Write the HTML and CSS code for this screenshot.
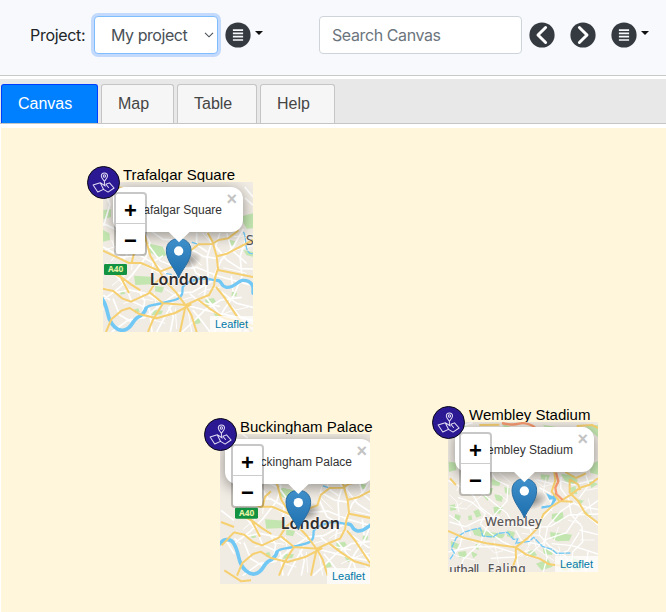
FILE: index.html
```html
<!DOCTYPE html>
<html lang="en">
<head>
<meta charset="utf-8">
<title>My project</title>
<link rel="stylesheet" href="styles.css">
</head>
<body>
<svg class="defs" width="0" height="0" aria-hidden="true">
  <defs>
    <linearGradient id="pin-fill" x1="0" y1="0" x2="0" y2="1"><stop offset="0" stop-color="#3f8fca"/><stop offset="1" stop-color="#1d6fae"/></linearGradient>
    <radialGradient id="pin-shade"><stop offset="0" stop-color="#000" stop-opacity=".42"/><stop offset="1" stop-color="#000" stop-opacity="0"/></radialGradient>
    <g id="pin">
      <ellipse cx="40" cy="-42" rx="46" ry="27" transform="rotate(-18)" fill="url(#pin-shade)"/>
      <path d="M0 0C-8-24-37-50-37-82C-37-105-21-118 0-118S37-105 37-82C37-50 8-24 0 0Z" fill="url(#pin-fill)" stroke="#2b6da1" stroke-width="3"/>
      <circle cy="-81" r="14" fill="#fff"/>
    </g>
    <symbol id="map-badge" viewBox="0 0 34 34">
      <g fill="none" stroke="#e4e0f5" stroke-width="1.1" stroke-linejoin="round" stroke-linecap="round">
        <path d="M13.4 17.2L5.6 19.8L10.7 27.5L17 24.5L22 27.5L28.6 23L23.6 17.4L19.6 18.9M13.4 17.2L19 20.8M13.4 17.2L17 24.5M19.6 18.9L22.5 22.5"/>
        <path d="M18 19.7V15.5M18 15.5C16 13.3 14.6 12 14.6 9.9A3.4 3.4 0 0 1 21.4 9.9C21.4 12 20 13.3 18 15.5Z"/>
        <circle cx="18" cy="9.9" r="1.3"/>
      </g>
    </symbol>
    <symbol id="menu" viewBox="0 0 26 26"><circle cx="13" cy="13" r="12.6" fill="#343a40"/><path d="M7.9 8.1H18.1M7.9 11.4H18.1M7.9 14.7H18.1M7.9 18H18.1" stroke="#f8f9fc" stroke-width="1.7"/></symbol>
    <g id="london">
      <path fill="#f0ebe3" d="M20 60H530V550H20Z"/>
      <g fill="#c3e6b0">
        <path d="M204 250L248 260L259 284L245 294L208 277ZM162 347L222 351L218 373L166 375ZM226 377L252 382L246 398L225 394ZM480 170L519 160V205L500 206ZM376 418L401 414L408 425L377 441ZM222 450L249 452L244 463L215 466ZM69 210L88 220L90 240L69 245ZM449 240L466 243L460 257L446 252ZM490 270L519 276V290L500 286ZM340 480L358 474L362 489L346 493ZM70 150L93 148V171L70 178ZM164 448L175 445L179 456L165 460ZM456 395L471 398L469 409L454 407ZM400 459L423 466L411 476ZM120 392L130 390L136 401L122 404Z"/>
      </g>
      <g fill="none" stroke="#fff" stroke-width="5">
        <path d="M69 190L136 222L204 253L240 302L298 326L350 322L414 348L519 377M69 260L124 292L178 285L230 315L280 357M81 310L111 350L145 389L201 401L250 430L320 436L410 459L519 480M95 516L145 480L193 473L243 433L290 400L338 396L400 361M190 208L210 248L198 291L155 346L118 383L69 420M118 190L145 247L173 285M204 207L249 238L300 241M230 516L255 469L279 427M271 516L280 470L266 440M306 516L345 480L375 450L422 420L485 412M380 218L394 250L381 292L384 345L373 406L425 471L442 516M420 218L407 258L440 300L480 326L519 327M440 220L455 270L500 310M490 207L460 260L424 300L401 350M500 230L480 290L486 350L460 409L430 452L404 516M328 265L370 289L414 296M325 290L348 339L374 355M329 401L360 427L420 439M99 416L119 465L155 486M131 361L154 423L208 448L216 516M74 385L111 397L145 390M176 390L194 423L186 474M350 218L350 254L382 276M338 450L368 486L390 516M424 396L470 430L519 442M454 439L480 470L519 483M454 347L459 395M250 287L220 304L215 347M150 270L130 300M70 405L90 420M30 320L69 350M45 410L70 450M69 90L90 132L71 198M80 79L110 103M494 81L519 110M495 114L519 135"/>
        <path stroke-width="3" d="M95 240L111 280L93 304M160 260L155 330M191 315L240 340M223 400L230 445M253 385L306 420L340 410M286 445L290 507M324 449L335 516M354 405L376 390L422 381M430 323L500 340M430 280L519 257M460 230L519 225M390 480L450 454L505 441M460 486L500 510M130 430L180 416L220 422M96 377L140 341M74 270L108 259M332 250L325 278L365 317M350 371L379 376M210 477L256 490M368 219L417 277"/>
      </g>
      <g fill="none" stroke="#72c8f4" stroke-linecap="round" stroke-linejoin="round">
        <path stroke-width="11" d="M28 420C38 403 62 404 69 421C81 440 81 458 88 477C96 496 112 513 130 511C158 506 155 482 172 473C186 467 194 459 198 445"/>
        <path stroke-width="7" d="M198 445C205 432 228 437 250 428C285 420 304 418 307 398L308 382C317 365 332 366 348 358C378 350 391 361 411 361"/>
        <path stroke-width="10" d="M411 361C429 361 419 379 440 382C463 383 470 366 486 361C503 360 515 366 519 382V400"/>
        <path stroke-width="4" d="M260 341L278 344M491 217C502 239 491 266 510 280L519 281M337 247L358 254" stroke-dasharray="14 6"/>
      </g>
      <g fill="none" stroke="#f6d070" stroke-width="6" stroke-linejoin="round">
        <path d="M190 214L201 251L211 288L240 336L260 367L288 397L317 436L334 465L350 516M69 272L107 290L147 309L183 309L241 334L284 318L319 305L329 274L356 253L396 252L416 240L445 235L476 211M383 219L397 244L410 289L414 326L406 350L402 377L387 405L354 418L318 435L249 430L208 396M414 330L519 351M410 289L441 281L519 240M300 516L317 436M204 516L219 479L249 430M69 386L100 393L126 415L153 425L205 401L224 371L249 349M119 345L147 399M78 516L94 478L126 451L149 444L180 463L230 475L285 459L334 433M351 417L391 447L430 473L519 498M408 381L431 409L475 475L516 516M79 330L123 351L154 374L181 391M69 88L93 81L130 84M155 309L162 279L180 263M32 425L69 386M30 355L69 370M40 500L91 533L120 530"/>
      </g>
      <text x="298" y="376" class="city" textLength="178">London</text>
      <rect x="72" y="312" width="69" height="33" rx="4" fill="#139342"/>
      <text x="107" y="337" class="road">A40</text>
      <text x="497" y="256" class="suburb">S</text>
      <text x="484" y="528" class="faint">Gr</text>
    </g>
  </defs>
</svg>

<header class="toolbar">
  <label class="project">Project:</label>
  <div class="select"><span>My project</span><svg width="10" height="6" viewBox="0 0 10 6"><path d="M1 .8L5 4.8L9 .8" fill="none" stroke="#495057" stroke-width="1.1"/></svg></div>
  <svg class="icon first-menu"><use href="#menu"/></svg><i class="caret"></i>
  <div class="search">Search Canvas</div>
  <svg class="icon prev" viewBox="0 0 26 26"><circle cx="13" cy="13" r="12.6" fill="#343a40"/><path d="M16.6 5.5L9 13L16.6 20.5" fill="none" stroke="#fff" stroke-width="3" stroke-linecap="round" stroke-linejoin="round"/></svg>
  <svg class="icon next" viewBox="0 0 26 26"><circle cx="13" cy="13" r="12.6" fill="#343a40"/><path d="M9.4 5.5L17 13L9.4 20.5" fill="none" stroke="#fff" stroke-width="3" stroke-linecap="round" stroke-linejoin="round"/></svg>
  <svg class="icon last-menu"><use href="#menu"/></svg><i class="caret"></i>
</header>

<nav class="tabs">
  <a class="tab active">Canvas</a><a class="tab map-tab">Map</a><a class="tab table-tab">Table</a><a class="tab help-tab">Help</a>
</nav>

<main class="canvas">
  <section class="node trafalgar">
    <h2>Trafalgar Square</h2>
    <div class="map">
      <svg class="tiles" viewBox="69 66 450 450"><use href="#london"/></svg>
      <div class="popup"><span>Trafalgar Square</span><b>×</b></div>
      <svg class="tiles" viewBox="69 66 450 450"><use href="#pin" x="296" y="354"/><path d="M264 214H331L297 247Z" fill="#fff"/></svg>
      <div class="zoom"><span>+</span><span>−</span></div>
      <div class="credit">Leaflet</div>
    </div>
    <svg class="badge"><use href="#map-badge"/></svg>
  </section>

  <section class="node buckingham">
    <h2>Buckingham Palace</h2>
    <div class="map">
      <svg class="tiles" viewBox="66 72 450 450"><use href="#london" x="39" y="-19"/></svg>
      <div class="popup"><span>Buckingham Palace</span><b>×</b></div>
      <svg class="tiles" viewBox="66 72 450 450"><use href="#pin" x="301" y="359"/><path d="M268 219H335L301 252Z" fill="#fff"/></svg>
      <div class="zoom"><span>+</span><span>−</span></div>
      <div class="credit">Leaflet</div>
    </div>
    <svg class="badge"><use href="#map-badge"/></svg>
  </section>

  <section class="node wembley">
    <h2>Wembley Stadium</h2>
    <div class="map">
      <svg class="tiles" viewBox="66 66 450 450">
        <path fill="#f0ebe3" d="M66 66H516V516H66Z"/>
        <path fill="#c3e6b0" d="M178 266L202 264L195 281L176 280ZM197 237L225 243L220 258L198 256ZM235 261L251 265L250 285L237 278ZM205 283L232 288L227 306L210 301ZM202 321L231 319L222 341L205 340ZM170 285L190 292L184 303ZM142 334L158 328L166 347L151 353ZM126 349L136 345L139 359L128 361ZM378 342L411 337L413 359L390 367L377 356ZM469 330L498 346L484 352ZM372 396L438 404L430 422L393 424L374 411ZM405 222L444 226L456 244L434 255L418 245ZM430 265L448 258L454 282L435 283ZM490 195L516 183V224L493 218ZM454 298L474 302L461 315ZM139 390L161 383L178 395L165 410L145 405ZM168 392L237 403L230 415L170 410ZM244 391L267 397L262 415L243 409ZM74 423L99 432L93 448L75 440ZM96 456L119 453L123 469L101 475ZM134 453L155 463L142 475ZM150 431L161 432L157 450L148 445ZM350 445L383 452L378 465L354 463ZM435 470L472 487L462 511L435 508ZM330 491L365 477L380 500L347 511ZM71 316L86 313L91 330L73 332ZM88 342L105 347L98 366L84 360ZM228 71L252 79L242 98ZM80 75L120 78L110 91ZM350 74L391 81L370 93ZM476 77L516 75V112ZM68 185L91 188V210L69 216ZM305 456L322 449L333 466L316 470ZM405 494L422 489L427 510L409 512ZM344 223L372 226L365 242L345 236ZM486 239L516 252L496 264Z"/>
        <g fill="none" stroke="#fff" stroke-width="4">
          <path d="M67 242L100 258L142 286L163 322L202 351L238 366L303 384L374 379L430 345L516 342M96 292L137 306L178 341L163 371L192 398L228 424L267 443L279 510M129 216L158 271L205 310L243 340L260 371M196 218L210 240L246 257L243 303L207 343L180 388L162 430L112 478L98 516M71 366L119 380L160 360L221 351M67 456L137 441L206 440L270 460M340 263L372 280L378 324L345 361L340 405L370 438L418 468L442 516M331 239L373 250L410 244L443 255L502 240M405 231L404 265L428 298L436 345L468 380L470 426L440 456L436 499M516 302L458 343L421 398L363 417L302 471M352 516L363 473L354 435L365 380L404 334L440 310L490 324L516 328M377 431L438 437L516 462M269 391L286 421L347 436L392 464L425 453L460 397M69 345L100 366L112 392L102 438L72 479M67 90L140 68M195 475L266 471L310 450M478 221L489 255L459 295M480 345L516 375M460 390L516 404M486 455L479 516M305 370L316 395L307 435"/>
          <path stroke-width="2.5" d="M70 284L92 304L99 337M110 239L92 273M110 306L87 324M171 255L168 286L124 323M220 219L254 248M222 283L244 303M129 379L133 408M170 425L206 459L231 452M287 400L340 407M321 408L332 447L384 482M315 430L285 470M398 380L384 422M398 437L412 501M426 360L465 371M487 295L496 340M442 306L477 334M463 420L506 420M352 314L380 334M325 239L350 260L388 251M204 423L218 490M74 415L131 420L167 438M89 467L146 480M361 230L352 276L383 322M71 320L124 327M481 271L516 264"/>
        </g>
        <path fill="none" stroke="#72c8f4" stroke-width="4" stroke-dasharray="18 3" d="M72 478L85 459L76 445L91 413L116 396L142 388L163 384L170 408L201 411L216 400L245 397L262 418L275 417L270 430L310 424L323 412L349 439L378 448L391 460L433 459"/>
        <path fill="#6fc5f2" d="M390 275L380 289L360 279L370 299L381 298L374 315L347 319L346 326L376 321L391 300Z"/>
        <g fill="none" stroke="#f6d070" stroke-width="6" stroke-linejoin="round"><path d="M66 393L118 415L181 430L269 442L301 464L341 476L369 493L405 497L423 510M269 442L270 474L260 502L262 516M269 442L304 415L334 385L352 343L378 319L431 286L463 263L489 255L516 235M385 215L388 242L377 275L400 303L440 305M431 238L431 278L456 303L478 340L516 369M431 238L456 253L463 270M418 216L450 234L480 220M72 235L90 255M160 75L220 74M452 78L498 75L516 84"/></g>
        <path d="M228 69Q258 77 279 71T327 82M390 218L397 244L388 263L391 282L410 300" fill="none" stroke="#f79a70" stroke-width="7"/>
        <text x="262" y="378" class="wembley-label" textLength="170">Wembley</text>
        <text x="115" y="521" class="cut-label" textLength="90">uthall</text>
        <text x="242" y="518" class="cut-label" textLength="114">Ealing</text>
      </svg>
      <div class="popup"><span>Wembley Stadium</span><b>×</b></div>
      <svg class="tiles" viewBox="66 66 450 450"><use href="#pin" x="295" y="354"/><path d="M262 214H329L295 247Z" fill="#fff"/></svg>
      <div class="zoom"><span>+</span><span>−</span></div>
      <div class="credit">Leaflet</div>
    </div>
    <svg class="badge"><use href="#map-badge"/></svg>
  </section>
</main>
</body>
</html>
```
FILE: styles.css
```css
* { box-sizing: border-box; }
body { margin: 0; width: 666px; height: 612px; overflow: hidden; background: #fff; font-family: "Liberation Sans", Arial, sans-serif; }
.defs { position: absolute; }
.toolbar { display: flex; align-items: center; height: 76px; padding: 0 0 6px 30px; background: #f8f9fc; border-bottom: 1px solid #c9c9c9; font: 16px Inter, sans-serif; letter-spacing: -.3px; color: #212529; }
.project { width: 64px; flex: none; }
.select { display: flex; align-items: center; justify-content: space-between; flex: none; width: 124px; height: 38px; padding: 0 3px 0 16px; background: #fff; border: 1px solid #80bdff; border-radius: 4px; box-shadow: 0 0 0 3px #c3dafd; color: #495057; letter-spacing: -.45px; }
.icon { width: 26px; height: 26px; flex: none; }
.first-menu { margin-left: 7px; }
.caret { flex: none; margin: -4px 0 0 4px; border: 4.5px solid transparent; border-top-color: #111; border-bottom: 0; }
.search { flex: none; width: 203px; height: 38px; margin-left: 56px; padding: 0 12px; line-height: 36px; border: 1px solid #ced4da; border-radius: 4px; background: #fff; color: #6c757d; letter-spacing: -.4px; }
.prev { margin-left: 7px; }
.next, .last-menu { margin-left: 15px; }
.tabs { display: flex; align-items: flex-end; height: 45px; margin-top: 3px; padding-left: 1px; background: #e8e8e8; border-bottom: 1px solid #c5c5c5; }
.tab { height: 39px; padding-left: 16px; border: 1px solid #c5c5c5; border-bottom: 0; border-radius: 3px 3px 0 0; background: #f6f6f6; color: #454545; font-size: 16px; line-height: 38px; }
.active { width: 97px; background: #007fff; border-color: #003eff; color: #fff; }
.map-tab { width: 73px; margin-left: 3px; }
.table-tab { width: 80px; margin-left: 3px; }
.help-tab { width: 75px; margin-left: 3px; }
.canvas { position: relative; height: 484px; margin: 4px 0 0 1px; background: #fff6dc; }
.node { position: absolute; width: 150px; height: 150px; }
.trafalgar { left: 102px; top: 54px; }
.buckingham { left: 219px; top: 306px; }
.wembley { left: 447px; top: 294px; }
.node h2 { position: absolute; left: 20px; top: -17px; margin: 0; font-size: 15px; line-height: 19px; font-weight: 400; white-space: nowrap; color: #000; }
.wembley h2 { left: 21px; }
.map { position: relative; width: 150px; height: 150px; overflow: hidden; }
.tiles { position: absolute; inset: 0; width: 150px; height: 150px; }
.badge { position: absolute; left: -16.5px; top: -16.5px; width: 33px; height: 33px; border: 1.5px solid #080815; border-radius: 50%; background: #2b1893; }
.wembley .badge { left: -16px; }
.popup { position: absolute; left: 10px; top: 5px; width: 130px; height: 45px; border-radius: 12px; background: #fff; box-shadow: 0 3px 14px rgba(0,0,0,.4); font-size: 12px; line-height: 46px; color: #333; white-space: nowrap; }
.popup span { position: absolute; right: 21px; }
.popup b { position: absolute; right: 6px; top: 4px; font-size: 18px; line-height: 16px; color: #c3c3c3; }
.buckingham .popup { left: 5px; width: 148px; }
.wembley .popup { left: 7px; width: 139px; }
.zoom { position: absolute; left: 11px; top: 10px; width: 33px; height: 64px; border: 2px solid rgba(0,0,0,.22); border-radius: 4px; background: #fff; background-clip: padding-box; text-align: center; font-weight: 700; font-size: 22px; color: #000; }
.zoom span { display: block; height: 30px; line-height: 34px; }
.zoom span:first-child { border-bottom: 1px solid #ccc; }
.credit { position: absolute; right: 0; bottom: 0; height: 16px; padding: 0 5px; background: rgba(255,255,255,.72); color: #0078a8; font-size: 11px; line-height: 16px; }
.city { font: 600 48px "Noto Sans", sans-serif; fill: #302d2d; text-anchor: middle; stroke: #fff; stroke-width: 4px; stroke-opacity: .6; paint-order: stroke; }
.road { font: 700 25px "Noto Sans", sans-serif; fill: #e9f4a8; text-anchor: middle; }
.suburb { font: 44px "Noto Sans", sans-serif; fill: #555; }
.faint { font: 30px "Noto Sans", sans-serif; fill: #bbb; }
.wembley-label { font: 500 38px "Noto Sans", sans-serif; fill: #5b5757; text-anchor: middle; stroke: #fff; stroke-width: 4px; stroke-opacity: .6; paint-order: stroke; }
.cut-label { font: 500 36px "Noto Sans", sans-serif; fill: #575454; text-anchor: middle; stroke: #fff; stroke-width: 4px; stroke-opacity: .6; paint-order: stroke; }
```
